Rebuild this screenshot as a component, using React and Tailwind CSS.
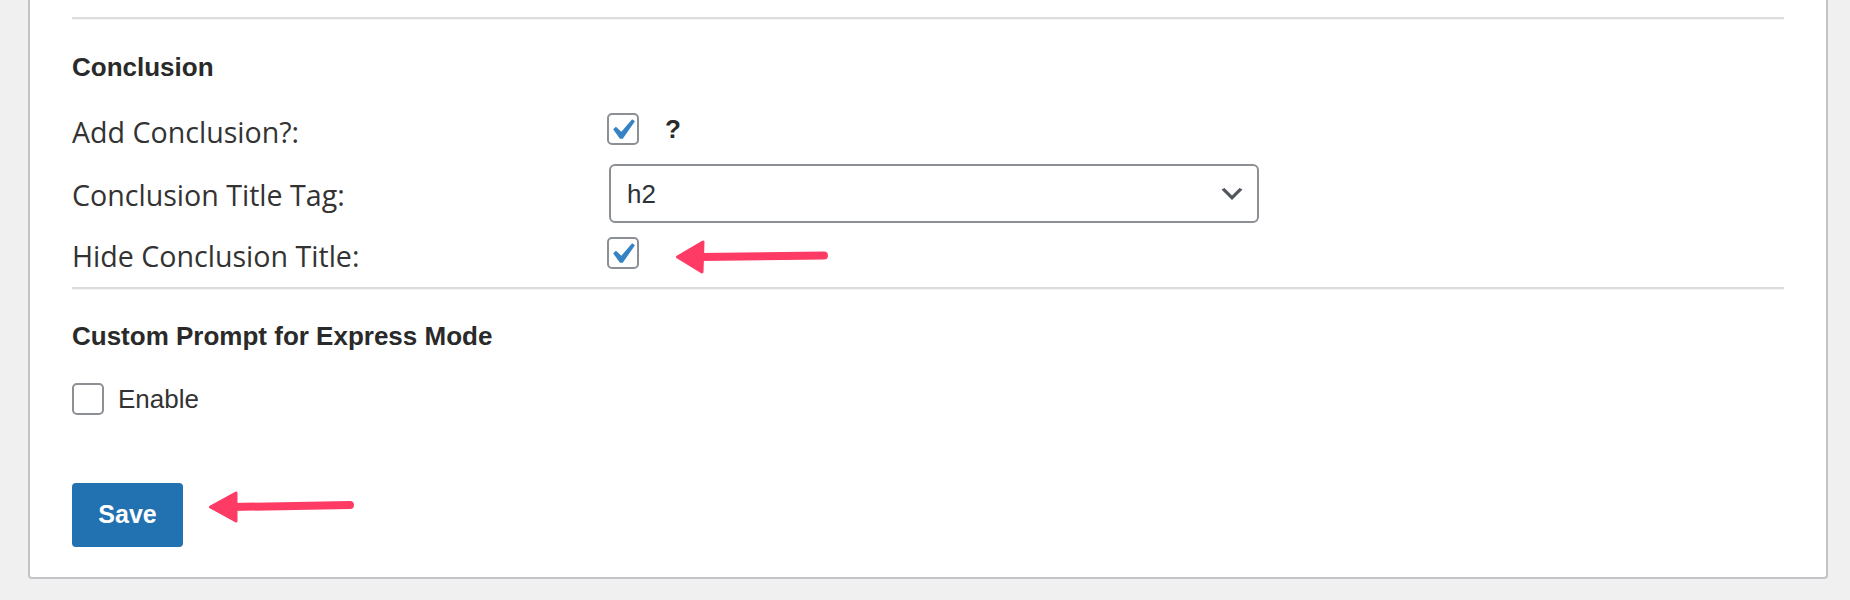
import React from 'react';

// WordPress-style checkbox, drawn at 2x
const Checkbox = ({ checked }) => (
  <span className="relative inline-block w-[32px] h-[32px] shrink-0 rounded-[5px] border-2 border-[#8c8f94] bg-white">
    {checked && (
      <svg className="absolute left-[-8px] top-[-6px] w-[42px] h-[42px]" viewBox="0 0 20 20">
        <path d="M14.83 4.89l1.34.94-5.81 8.38H9.02L5.78 9.67l1.34-1.25 2.57 2.4z" fill="#3582c4" />
      </svg>
    )}
  </span>
);

const Separator = () => (
  <div className="h-0 border-t-2 border-b border-t-[#dcdcde] border-b-[#f4f4f5]" />
);

const Label = ({ children, className = 'pt-[6px]' }) => (
  <div className={`w-[535px] shrink-0 font-['Open_Sans',sans-serif] text-[28.6px] leading-[38px] text-[#333] ${className}`}>
    {children}
  </div>
);

const Arrow = ({ head, from, to }) => (
  <g>
    <polygon points={head} fill="#fe3b65" stroke="#fe3b65" strokeWidth="3" strokeLinejoin="round" />
    <line x1={from[0]} y1={from[1]} x2={to[0]} y2={to[1]} stroke="#fe3b65" strokeWidth="8" strokeLinecap="round" />
  </g>
);

export default function App() {
  return (
    <div className="relative min-h-[600px] bg-[#f0f0f1] font-['Liberation_Sans',Arial,sans-serif]">
      <div className="ml-[28px] w-[1800px] bg-white border-x-2 border-b-2 border-[#c3c4c7] rounded-b-[4px] px-[42px] pt-[17px] pb-[30px]">
        <Separator />

        <h3 className="mt-[32px] text-[26px] leading-[30px] font-bold text-[#2a2a2a]">Conclusion</h3>

        <div className="mt-[15px] flex items-center h-[63px]">
          <Label>Add Conclusion?:</Label>
          <Checkbox checked />
          <span className="ml-[26px] text-[26px] leading-[30px] font-bold text-[#2a2a2a]">?</span>
        </div>

        <div className="flex items-center h-[67px]">
          <Label className="pt-[2px]">Conclusion Title Tag:</Label>
          <div className="ml-[2px] w-[650px] h-[59px] flex items-center justify-between rounded-[6px] border-2 border-[#8c8f94] bg-white pl-[16px] pr-[10px]">
            <span className="text-[26px] leading-[30px] text-[#2c3338]">h2</span>
            <svg className="w-[30px] h-[30px]" viewBox="0 0 20 20">
              <path d="M5 6l5 5 5-5 2 1-7 7-7-7 2-1z" fill="#50575e" />
            </svg>
          </div>
        </div>

        <div className="flex items-center h-[51px]">
          <Label>Hide Conclusion Title:</Label>
          <Checkbox checked />
        </div>

        <div className="mt-[9px]">
          <Separator />
        </div>

        <h3 className="mt-[31px] text-[26px] leading-[30px] font-bold text-[#2a2a2a]">Custom Prompt for Express Mode</h3>

        <label className="mt-[32px] flex items-center h-[31px]">
          <Checkbox />
          <span className="ml-[14px] text-[26px] leading-[30px] text-[#333]">Enable</span>
        </label>

        <button className="mt-[69px] w-[111px] h-[64px] rounded-[4px] bg-[#2271b1] text-white text-[25px] font-bold">
          Save
        </button>
      </div>

      <svg className="absolute left-0 top-0 w-[1850px] h-[600px] pointer-events-none" viewBox="0 0 1850 600">
        <Arrow head="677.5,257 703,242 702,272" from={[700, 257]} to={[824, 255.5]} />
        <Arrow head="210.5,507 236,493 236,521" from={[232, 507]} to={[350, 505]} />
      </svg>
    </div>
  );
}
